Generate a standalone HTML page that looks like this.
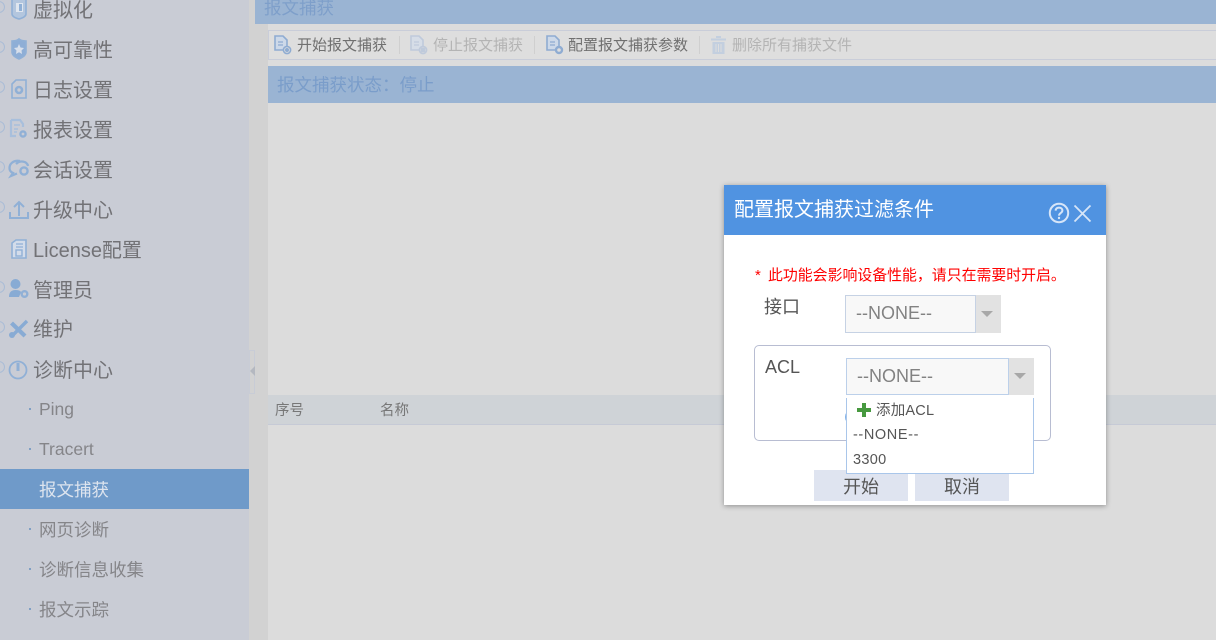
<!DOCTYPE html>
<html><head><meta charset="utf-8">
<style>
*{box-sizing:border-box}
html,body{margin:0;padding:0}
body{width:1216px;height:640px;overflow:hidden;position:relative;background:#dcdcdc;font-family:"Liberation Sans","Noto Sans CJK SC",sans-serif;}
.a{position:absolute;white-space:nowrap}
.m{font-size:20px;line-height:28px;left:33px;color:#727276}
.s{font-size:17.5px;line-height:26px;left:39px;color:#858589}
.d{position:absolute;left:29px;width:2px;height:2px;background:#7f9fc4}
.c{position:absolute;left:-7px;width:12px;height:12px;border:1.5px solid #a9bcd6;border-radius:50%}
svg{position:absolute;overflow:visible}
.t{font-size:15px;line-height:20px;top:36px;color:#707070}
.o{color:#b4b4b4}
.sep{position:absolute;top:36px;width:1px;height:18px;background:#cfcfcf}
</style></head><body>
<div class="a" style="left:0;top:0;width:249px;height:640px;background:#c9ccd5"></div>
<div class="a" style="left:249px;top:0;width:19px;height:640px;background:#d2d2d2"></div>
<div class="a" style="left:249px;top:350px;width:6px;height:44px;border:1px solid #c8ccd6"></div>
<div class="a" style="left:250px;top:366px;width:0;height:0;border:5px solid transparent;border-left:0;border-right:5px solid #b4b8c0"></div>

<div class="c" style="top:1px"></div><div class="c" style="top:41px"></div><div class="c" style="top:81px"></div><div class="c" style="top:121px"></div><div class="c" style="top:161px"></div><div class="c" style="top:201px"></div><div class="c" style="top:281px"></div><div class="c" style="top:321px"></div><div class="c" style="top:361px"></div>

<div class="a m" style="top:-3px">虚拟化</div>
<div class="a m" style="top:37px">高可靠性</div>
<div class="a m" style="top:77px">日志设置</div>
<div class="a m" style="top:117px">报表设置</div>
<div class="a m" style="top:157px">会话设置</div>
<div class="a m" style="top:197px">升级中心</div>
<div class="a m" style="top:237px">License配置</div>
<div class="a m" style="top:277px">管理员</div>
<div class="a m" style="top:316px">维护</div>
<div class="a m" style="top:357px">诊断中心</div>
<div class="a s" style="top:396px">Ping</div><div class="d" style="top:408px"></div>
<div class="a s" style="top:436px">Tracert</div><div class="d" style="top:448px"></div>
<div class="a" style="left:0;top:469px;width:249px;height:40px;background:#6f9ac9"></div>
<div class="a s" style="top:477px;color:#dde4ee">报文捕获</div>
<div class="a s" style="top:517px">网页诊断</div><div class="d" style="top:528px"></div>
<div class="a s" style="top:557px">诊断信息收集</div><div class="d" style="top:568px"></div>
<div class="a s" style="top:597px">报文示踪</div><div class="d" style="top:608px"></div>

<!-- sidebar icons -->
<svg style="left:0;top:0" width="60" height="400" fill="none" stroke="#90b0d6" stroke-width="1.6">
<path d="M12 0V14Q12 17 19 19Q26 17 26 14V0" fill="#b3c6de"/><rect x="16" y="3" width="7" height="9" fill="#dfe6ef" stroke="none"/><rect x="19" y="4" width="3" height="7" fill="#90b0d6" stroke="none"/>
<path d="M12 41Q17 41 19 39Q21 41 26 41V52Q26 56 19 59Q12 56 12 52Z" fill="#8eaed6"/><path d="M19 44L20.500 47.500L24 48L21.500 50.500L22 54L19 52.300L16 54L16.500 50.500L14 48L17.500 47.500Z" fill="#d7dfeb" stroke="none"/>
<path d="M12 84L16 80H26V98H12Z"/><circle cx="19" cy="90" r="3" stroke-width="2.6"/>
<path d="M11 120H20L23 124V127M11 120V136H16" stroke-width="2.200" stroke="#a8bfdc"/><path d="M14 125H20M14 129H18M14 132H17" stroke="#a8bfdc"/><circle cx="23" cy="134" r="2.6" stroke-width="2.4"/>
<path d="M20 161C13 160 9.500 164 9.500 168C9.500 170 10.500 172 13 173L11 176L17 173.500" stroke-width="2.300"/><path d="M16 164C20 160 27 161 28 166" stroke-width="2.300"/><circle cx="24" cy="171" r="3.6" stroke-width="2.400"/>
<path d="M19 216V203M14 207L19 202L24 207" stroke-width="2"/><path d="M10 212V218H28V212" stroke-width="2"/>
<path d="M12 243L16 240H26V258H12Z" fill="#d3dcea"/><path d="M16 244H23M16 247H23" stroke-width="1.200"/><rect x="16" y="250" width="6" height="6" stroke-width="1.400"/>
<circle cx="15.500" cy="284" r="5" fill="#88abd4" stroke="none"/><path d="M9 297Q9 290 15.500 290Q20 290 21 292L19 297Z" fill="#88abd4" stroke="none"/><circle cx="24.500" cy="294" r="2.800" stroke-width="2.400"/>
<path d="M11.500 323L25 336" stroke-width="4.200" stroke="#88abd4"/><path d="M27 321L13 335" stroke-width="3.400" stroke="#88abd4"/><circle cx="12" cy="335" r="3" fill="#88abd4" stroke="none"/>
<circle cx="18" cy="370" r="8.500" stroke-width="1.800"/><path d="M18 363V371" stroke-width="3"/>
</svg>

<!-- main -->
<div class="a" style="left:255px;top:0;width:961px;height:24px;background:#9ab4d3"></div>
<div class="a" style="left:264px;top:-5px;font-size:17.5px;line-height:26px;color:#7e9fca">报文捕获</div>
<div class="a" style="left:268px;top:30px;width:948px;height:30px;background:#dedede;border:1px solid #c9cdd9;border-right:0"></div>
<svg style="left:272px;top:34px" width="300" height="22" fill="none" stroke-width="1.600">
<g stroke="#8facd2"><path d="M3 2H11L15 6V16H3Z" fill="#cdd9e9"/><path d="M6 8H11M6 11H11" stroke-width="1.200"/><circle cx="15" cy="16" r="3.600" fill="#dedede"/><circle cx="15" cy="16" r="1.200" fill="#8facd2"/></g>
<g stroke="#bfcadb" transform="translate(136)"><path d="M3 2H11L15 6V16H3Z" fill="#d6dde7"/><path d="M6 8H11M6 11H11" stroke-width="1.200"/><circle cx="15" cy="16" r="3.600" fill="#dedede"/><rect x="13.500" y="14.500" width="3" height="3" fill="#bfcadb"/></g>
<g stroke="#8facd2" transform="translate(272)"><path d="M3 2H11L15 6V16H3Z" fill="#cdd9e9"/><path d="M6 8H11M6 11H11" stroke-width="1.200"/><circle cx="15" cy="16" r="3" stroke-width="2.400" fill="#dedede"/></g>
</svg>
<svg style="left:711px;top:36px" width="20" height="20" fill="#c3cfdf"><rect x="0" y="2.500" width="15" height="2"/><rect x="5" y="0" width="5" height="2"/><path d="M1.500 6H13.500V18H1.500Z"/><path d="M5 8V16M7.500 8V16M10 8V16" stroke="#dedede"/></svg>
<div class="a t" style="left:297px">开始报文捕获</div>
<div class="sep" style="left:399px"></div>
<div class="a t o" style="left:433px">停止报文捕获</div>
<div class="sep" style="left:534px"></div>
<div class="a t" style="left:568px">配置报文捕获参数</div>
<div class="sep" style="left:699px"></div>
<div class="a t o" style="left:732px">删除所有捕获文件</div>

<div class="a" style="left:268px;top:66px;width:948px;height:37px;background:#9ab4d3"></div>
<div class="a" style="left:277px;top:72px;font-size:17.5px;line-height:26px;color:#7a9dca">报文捕获状态：停止</div>
<div class="a" style="left:268px;top:395px;width:948px;height:30px;background:#cfd3d7;border-bottom:1px solid #c6cad6"></div>
<div class="a" style="left:275px;top:401px;font-size:14.500px;line-height:20px;color:#777">序号</div>
<div class="a" style="left:380px;top:401px;font-size:14.500px;line-height:20px;color:#777">名称</div>

<!-- dialog -->
<div class="a" style="left:724px;top:185px;width:382px;height:320px;background:#fff;box-shadow:0 1px 5px rgba(0,0,0,.35)"></div>
<div class="a" style="left:724px;top:185px;width:382px;height:50px;background:#5093e1"></div>
<div class="a" style="left:734px;top:196px;font-size:20px;line-height:28px;color:#fff">配置报文捕获过滤条件</div>
<svg style="left:1048px;top:202px" width="46" height="22" fill="none" stroke="#d6e5f8">
<circle cx="11" cy="11" r="9.200" stroke-width="2"/>
<path d="M7.600 8.600C7.800 6.600 9.200 5.600 11 5.600C13 5.600 14.400 6.800 14.400 8.500C14.400 11 11 11 11 13.600" stroke-width="2"/><circle cx="11" cy="16" r="1.200" fill="#d6e5f8" stroke="none"/>
<path d="M26.500 3.500L42.500 19.500M42.500 3.500L26.500 19.500" stroke-width="1.800"/>
</svg>
<div class="a" style="left:755px;top:265px;font-size:15px;line-height:22px;color:#f00">*</div>
<div class="a" style="left:768px;top:265px;font-size:14.900px;line-height:22px;color:#f00">此功能会影响设备性能，请只在需要时开启。</div>
<div class="a" style="left:764px;top:294px;font-size:18px;line-height:26px;color:#555">接口</div>
<div class="a" style="left:845px;top:295px;width:131px;height:38px;background:#f8f8f8;border:1px solid #c6d2e4"></div>
<div class="a" style="left:976px;top:295px;width:25px;height:38px;background:#e2e2e2"></div>
<div class="a" style="left:981px;top:311px;width:0;height:0;border:6px solid transparent;border-top:6px solid #a8a8a8;border-bottom:0"></div>
<div class="a" style="left:856px;top:301px;font-size:18px;line-height:24px;color:#828282;font-family:'Liberation Sans',sans-serif">--NONE--</div>

<div class="a" style="left:754px;top:345px;width:297px;height:96px;border:1px solid #b8bdd2;border-radius:5px"></div>
<div class="a" style="left:765px;top:354px;font-size:18px;line-height:26px;color:#555">ACL</div>
<div class="a" style="left:846px;top:358px;width:163px;height:37px;background:#f8f8f8;border:1px solid #bcd0ea"></div>
<div class="a" style="left:1009px;top:358px;width:25px;height:37px;background:#e2e2e2"></div>
<div class="a" style="left:1014px;top:373px;width:0;height:0;border:6px solid transparent;border-top:6px solid #a8a8a8;border-bottom:0"></div>
<div class="a" style="left:857px;top:364px;font-size:18px;line-height:24px;color:#828282;font-family:'Liberation Sans',sans-serif">--NONE--</div>

<div class="a" style="left:814px;top:470px;width:94px;height:31px;background:#dfe4f0"></div>
<div class="a" style="left:915px;top:470px;width:94px;height:31px;background:#dfe4f0"></div>
<div class="a" style="left:843px;top:474px;font-size:18px;line-height:26px;color:#555">开始</div>
<div class="a" style="left:944px;top:474px;font-size:18px;line-height:26px;color:#555">取消</div>

<div class="a" style="left:845px;top:411px;width:8px;height:12px;border:1.500px solid #7fb0e8;border-radius:50%"></div>
<div class="a" style="left:846px;top:398px;width:188px;height:76px;background:#fff;border:1px solid #a9c6ea;border-top:0"></div>
<svg style="left:857px;top:403px" width="14" height="14"><path d="M5 0H9V5H14V9H9V14H5V9H0V5H5Z" fill="#47993f"/></svg>
<div class="a" style="left:876px;top:401px;font-size:14.500px;line-height:20px;color:#555;letter-spacing:.2px">添加ACL</div>
<div class="a" style="left:853px;top:425px;font-size:14.500px;line-height:20px;color:#555;letter-spacing:.6px">--NONE--</div>
<div class="a" style="left:853px;top:450px;font-size:14.500px;line-height:20px;color:#555;letter-spacing:.3px">3300</div>
</body></html>
